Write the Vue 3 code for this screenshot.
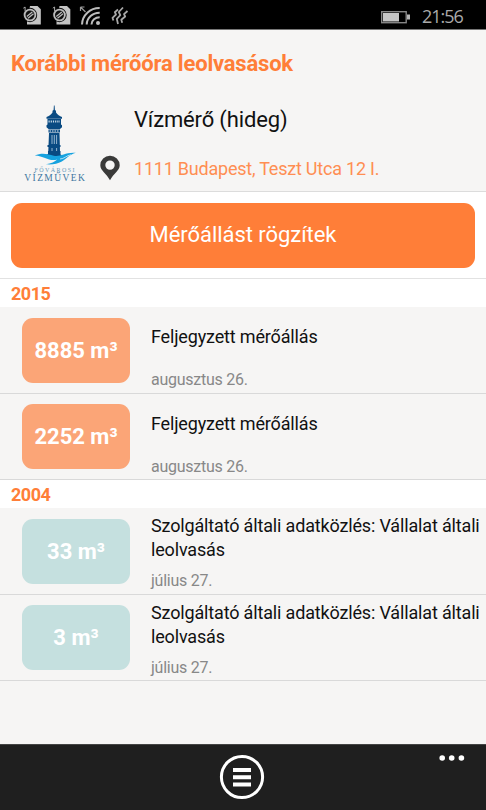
<template>
    <div class="phone">
        <div class="status-bar">
            <svg class="status-icons" width="110" height="29" viewBox="0 0 110 29">
                <g v-for="x in [0, 29.5]" :key="x" :transform="`translate(${x} 0)`">
                    <path d="M30 6h7.5l3.3 3.3V24.5H27V20z" fill="#c4c4c4" />
                    <circle cx="30" cy="15" r="7.2" fill="#0b0b0b" />
                    <circle cx="30" cy="15" r="5.4" fill="#111" stroke="#bcbcbc" stroke-width="1.8" />
                    <path d="M26.8 16.5l5.5-4.5M28 18.3l5.5-4.5" fill="none" stroke="#bcbcbc" stroke-width="1.3" />
                    <path d="M23.3 8.2l1.8-1.2v4.5" fill="none" stroke="#aaa" stroke-width="1" />
                </g>
                <g fill="none" stroke="#bdbdbd" stroke-width="2">
                    <path d="M82 24.5A17.5 17 0 0 1 99.7 8M86.7 24.5A12.8 12 0 0 1 99.7 12.7M91.5 24.5A8.3 7.5 0 0 1 99.7 17.2" />
                </g>
                <circle cx="98" cy="23" r="2" fill="#bdbdbd" />
                <path d="M80.5 7h4M80.5 7v4M80.5 7l5 5" fill="none" stroke="#999" stroke-width="1.2" />
            </svg>
            <svg class="vibrate" width="18" height="29" viewBox="0 0 18 29">
                <g fill="none" stroke="#a8a8a8" stroke-width="1.8" stroke-linejoin="round">
                    <path d="M7 9.5L3.8 12.2 5 14.5 1.5 17.8 2.4 20.5" />
                    <path d="M12 7.5L7.8 12 9.3 15.2 5.8 18.8 7 24" />
                    <path d="M16.5 11L13 14.2 14.2 16.5 10.3 19.8 11.2 22.8" />
                </g>
            </svg>
            <svg class="battery" width="31" height="29" viewBox="0 0 31 29">
                <rect x="1.7" y="11.7" width="24.5" height="11" fill="none" stroke="#858585" stroke-width="1.4" />
                <path d="M3 13h16v8.5H3z" fill="#c5c5c5" />
                <path d="M27 14.5h3v5h-3z" fill="#b5b5b5" />
            </svg>
            <span class="clock">21:56</span>
        </div>

        <header class="meter">
            <h1>Korábbi mérőóra leolvasások</h1>
            <div class="meter-body">
                <svg class="logo" width="66" height="82" viewBox="0 0 66 82">
                    <g fill="#094a82">
                        <path d="M29.9.5h.7l.3 4.5 1.100.8v1.700c1.500 2 3.500 3.500 6 4.500v1.800H22.500V12c2.500-1 4.500-2.500 6-4.500V5.800l1.100-.8z" />
                        <path d="M23.500 14h13.500v5.500l1 .8v2l-2 1.700H24.500l-2-1.700v-2l1-.8z" />
                        <path d="M24.500 24.500h11.500v3H24.500zM25 28h10.500l.5 18H24.300zM23.500 40h13v2h-13zM24 46h12.500v3.500l1 .5-1 3H22v-3l2-1z" />
                    </g>
                    <path d="M24.500 16.500h11.500" stroke="#c9d9e6" stroke-width="2" stroke-dasharray="1.200 1" />
                    <path d="M25.500 26h10" stroke="#dfe8ef" stroke-width="1.200" stroke-dasharray="1.500 1" />
                    <path d="M28 30v9M30.300 30v9M32.600 30v9M28 43v3M32.600 43v3" stroke="#b9cfe1" stroke-width=".8" />
                    <path d="M10.800 50.500c7-3.200 13-1.500 19 .2 6.500 1.500 11-3.700 22-2.900-6.500 1.700-8.500 5.500-14 8.700-4.500 2.500-9 3.200-16 2.800 5.500-.8 9-2.500 11.500-4.800C25 57 21 51 10.800 50.500z" fill="#16a2df" />
                    <path d="M36 54c4 0 6.500-3.500 11-4.300" fill="none" stroke="#d8eef8" stroke-width=".8" />
                    <text x="10.5" y="67" class="logo-small" textLength="40">FŐVÁROSI</text>
                    <text x=".3" y="76.2" class="logo-large" textLength="60.5">VÍZMŰVEK</text>
                </svg>
                <svg class="pin" width="20" height="26" viewBox="0 0 20 26">
                    <path d="M10 .7A9.600 9.500 0 0 0 .3 10.200C.3 15.500 6.500 18.500 10 25.300 13.500 18.500 19.700 15.500 19.700 10.200A9.600 9.500 0 0 0 10 .7zm0 4.700a4.700 4.700 0 1 1 0 9.400 4.700 4.700 0 0 1 0-9.400z" fill="#3a3a39" />
                </svg>
                <div class="meter-text">
                    <div class="meter-name">Vízmérő (hideg)</div>
                    <div class="address">1111 Budapest, Teszt Utca 12 I.</div>
                </div>
            </div>
        </header>

        <div class="action">
            <button type="button">Mérőállást rögzítek</button>
        </div>

        <section v-for="group in groups" :key="group.year">
            <h2>{{ group.year }}</h2>
            <div v-for="(reading, index) in group.readings" :key="index" class="reading">
                <div class="amount" :class="group.type">{{ reading.value }} m³</div>
                <div class="info">
                    <p class="label">{{ reading.label }}</p>
                    <p class="date">{{ reading.date }}</p>
                </div>
            </div>
        </section>

        <footer>
            <svg class="menu" width="46" height="46" viewBox="0 0 46 46">
                <circle cx="23" cy="23" r="20.6" fill="none" stroke="#fff" stroke-width="3" />
                <path d="M14 16h18M14 23.3h18M14 30.6h18" stroke="#fff" stroke-width="4" />
            </svg>
            <svg class="more" width="26" height="8" viewBox="0 0 26 8">
                <circle v-for="x in [3.2, 12.7, 22.4]" :key="x" :cx="x" cy="4" r="2.8" fill="#fff" />
            </svg>
        </footer>
    </div>
</template>

<script setup>
const providerLabel = 'Szolgáltató általi adatközlés: Vállalat általi leolvasás'

const groups = [
    {
        year: 2015,
        type: 'recorded',
        readings: [
            { value: 8885, label: 'Feljegyzett mérőállás', date: 'augusztus 26.' },
            { value: 2252, label: 'Feljegyzett mérőállás', date: 'augusztus 26.' }
        ]
    },
    {
        year: 2004,
        type: 'provider',
        readings: [
            { value: 33, label: providerLabel, date: 'július 27.' },
            { value: 3, label: providerLabel, date: 'július 27.' }
        ]
    }
]
</script>

<style>
body {
    margin: 0;
}
</style>

<style scoped>
.phone {
    width: 486px;
    height: 810px;
    display: flex;
    flex-direction: column;
    overflow: hidden;
    background: #f6f5f4;
    color: #111;
    font-family: Roboto, sans-serif;
}

.status-bar {
    height: 30px;
    flex: none;
    box-sizing: border-box;
    display: flex;
    border-bottom: 1px solid #777;
    background: #000;
}

.vibrate {
    margin-left: 1px;
}

.battery {
    margin-left: 251px;
}

.clock {
    margin-left: 11px;
    color: #aaa;
    font: 18px/32px "Open Sans", sans-serif;
    letter-spacing: -1px;
}

.meter {
    height: 162px;
    flex: none;
    box-sizing: border-box;
    border-bottom: 1px solid #dcdcdc;
}

h1 {
    margin: 0;
    padding: 18px 11px 0;
    color: #ff7e38;
    font-size: 22px;
    line-height: 32px;
    font-weight: 700;
    letter-spacing: -0.2px;
    white-space: nowrap;
}

.meter-body {
    display: flex;
    padding: 25px 0 0 24px;
}

.pin {
    margin: 50px 0 0 10px;
}

.meter-text {
    margin-left: 14px;
}

.logo-small {
    fill: #6a9bbb;
    font: 6px "Liberation Serif", serif;
}

.logo-large {
    fill: #3d75a0;
    font: 9.5px "Liberation Serif", serif;
}

.meter-name {
    font-size: 22px;
    line-height: 30px;
    letter-spacing: -0.15px;
}

.address {
    margin-top: 22px;
    color: #ff8e52;
    font-size: 18px;
    line-height: 24px;
    letter-spacing: -0.22px;
}

.action {
    height: 87px;
    flex: none;
    box-sizing: border-box;
    padding: 11px;
    border-bottom: 1px solid #e2e2e2;
    background: #fff;
}

button {
    display: block;
    width: 100%;
    height: 65px;
    padding: 0 0 2px;
    border: 0;
    border-radius: 11px;
    background: #ff7e38;
    color: #fff;
    font: 22px/62px Roboto, sans-serif;
    letter-spacing: -0.05px;
}

h2 {
    height: 28px;
    margin: 0;
    padding-left: 11px;
    background: #fff;
    color: #ff7e38;
    font-size: 18px;
    line-height: 29px;
    font-weight: 700;
    letter-spacing: -0.5px;
}

.reading {
    height: 86.5px;
    box-sizing: border-box;
    display: flex;
    padding: 10.5px 0 0 22px;
    border-bottom: 1px solid #d9d9d9;
}

.amount {
    width: 108px;
    height: 65px;
    flex: none;
    border-radius: 11px;
    color: #fff;
    font-size: 22px;
    line-height: 66px;
    font-weight: 700;
    text-align: center;
}

.recorded {
    background: #fba577;
}

.provider {
    background: #c5e0df;
}

.info {
    margin: -4.5px 0 0 21px;
}

.info p {
    margin: 0;
}

.label {
    height: 48px;
    display: flex;
    align-items: center;
    font-size: 18px;
    line-height: 24px;
    letter-spacing: -0.16px;
}

.date {
    padding-top: 7px;
    color: #888;
    font-size: 16px;
    line-height: 24px;
    letter-spacing: -0.25px;
}

footer {
    height: 66px;
    flex: none;
    box-sizing: border-box;
    display: grid;
    grid-template-columns: 1fr 46px 1fr;
    margin-top: auto;
    padding: 9px 21px 0 19px;
    border-top: 1px solid #444;
    background: #1f1f1f;
}

.menu {
    grid-column: 2;
}

.more {
    justify-self: end;
}
</style>
